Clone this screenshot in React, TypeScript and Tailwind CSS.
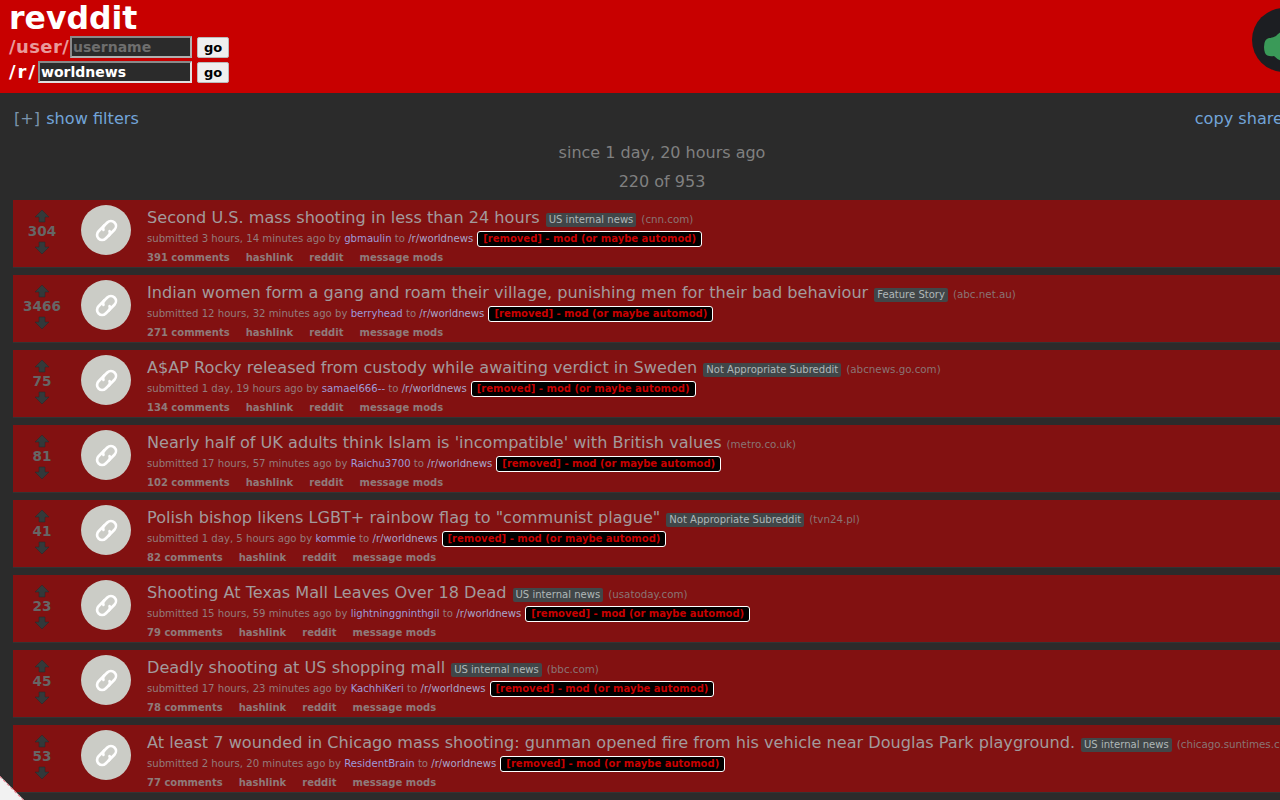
const posts = [
  { score: "304", title: "Second U.S. mass shooting in less than 24 hours", flair: "US internal news", domain: "cnn.com", age: "3 hours, 14 minutes", author: "gbmaulin", comments: "391 comments" },
  { score: "3466", title: "Indian women form a gang and roam their village, punishing men for their bad behaviour", flair: "Feature Story", domain: "abc.net.au", age: "12 hours, 32 minutes", author: "berryhead", comments: "271 comments" },
  { score: "75", title: "A$AP Rocky released from custody while awaiting verdict in Sweden", flair: "Not Appropriate Subreddit", domain: "abcnews.go.com", age: "1 day, 19 hours", author: "samael666--", comments: "134 comments" },
  { score: "81", title: "Nearly half of UK adults think Islam is 'incompatible' with British values", flair: "", domain: "metro.co.uk", age: "17 hours, 57 minutes", author: "Raichu3700", comments: "102 comments" },
  { score: "41", title: "Polish bishop likens LGBT+ rainbow flag to \"communist plague\"", flair: "Not Appropriate Subreddit", domain: "tvn24.pl", age: "1 day, 5 hours", author: "kommie", comments: "82 comments" },
  { score: "23", title: "Shooting At Texas Mall Leaves Over 18 Dead", flair: "US internal news", domain: "usatoday.com", age: "15 hours, 59 minutes", author: "lightninggninthgil", comments: "79 comments" },
  { score: "45", title: "Deadly shooting at US shopping mall", flair: "US internal news", domain: "bbc.com", age: "17 hours, 23 minutes", author: "KachhiKeri", comments: "78 comments" },
  { score: "53", title: "At least 7 wounded in Chicago mass shooting: gunman opened fire from his vehicle near Douglas Park playground.", flair: "US internal news", domain: "chicago.suntimes.com", age: "2 hours, 20 minutes", author: "ResidentBrain", comments: "77 comments" },
];

const Arrow = ({ down = false }: { down?: boolean }) => (
  <svg width="14" height="14" viewBox="0 0 14 14" className={down ? "rotate-180" : ""}>
    <path d="M7 1 L14 8 L10 8 L10 13 L4 13 L4 8 L0 8 Z" fill="#33393a" stroke="#24282a" strokeWidth="0.5" />
  </svg>
);

const LinkIcon = () => (
  <svg width="27" height="27" viewBox="0 0 24 24" fill="none" stroke="#ffffff" strokeWidth="2.4" strokeLinecap="round">
    <g transform="rotate(-45 12 12)">
      <path d="M14 7.5 H6.5 a4.5 4.5 0 0 0 0 9 H11 a3.5 3.5 0 0 0 2.5 -2.2" />
      <path d="M10 16.5 H17.5 a4.5 4.5 0 0 0 0 -9 H13 a3.5 3.5 0 0 0 -2.5 2.2" />
    </g>
  </svg>
);

const Post = ({ post }: { post: (typeof posts)[number] }) => (
  <div className="flex h-[68px] w-[1400px] bg-[#821111] border-b border-[#333333]">
    <div className="w-[58px] pt-[9px] flex flex-col items-center shrink-0">
      <Arrow />
      <div className="mb-px text-[13.6px] leading-[17px] font-bold text-[#666666]">{post.score}</div>
      <Arrow down />
    </div>
    <div className="w-[50px] h-[50px] mt-[5px] ml-[10px] rounded-full bg-[#cbccc6] flex items-center justify-center shrink-0">
      <LinkIcon />
    </div>
    <div className="ml-[16px] pt-[7px] whitespace-nowrap">
      <div className="h-[22px] flex items-baseline text-[#a39a9c]">
        <span className="text-[16.13px] leading-[22px]">{post.title}</span>
        {post.flair && (
          <span className="ml-[6px] px-[3px] text-[10.05px] leading-[14px] rounded-[2px] bg-[#414648] text-[#b0b8b8]">{post.flair}</span>
        )}
        <span className="ml-[5px] text-[10.3px] text-[#8a7474]">({post.domain})</span>
      </div>
      <div className="h-[19px] flex items-center text-[10.13px] text-[#947c7c]">
        <span>submitted {post.age} ago by&nbsp;</span>
        <span className="text-[#9f9ad8]">{post.author}</span>
        <span>&nbsp;to&nbsp;</span>
        <span className="text-[#a8a6cc]">/r/worldnews</span>
        <span className="ml-[4px] px-[5px] h-[16px] text-[10px] leading-[14px] border border-white rounded-[3px] bg-black text-[#c80000] font-bold">[removed] - mod (or maybe automod)</span>
      </div>
      <div className="h-[19px] flex items-center gap-[16px] text-[10px] font-bold text-[#8f7a7a]">
        <span>{post.comments}</span>
        <span>hashlink</span>
        <span>reddit</span>
        <span>message mods</span>
      </div>
    </div>
  </div>
);

export default function App() {
  return (
    <div className="relative h-[800px] w-[1280px] overflow-hidden bg-[#2b2b2b] font-['DejaVu_Sans',sans-serif]">
      <header className="relative h-[93px] bg-[#c80000] pl-[9px]">
        <div className="h-[34px] text-[31.5px] leading-[36px] font-bold text-white">revddit</div>
        <div className="flex items-center h-[25px] text-[18px] font-bold">
          <span className="w-[61px] tracking-[0.4px] text-[#e89a9a]">/user/</span>
          <input readOnly placeholder="username" className="w-[122px] h-[22px] px-px border-2 border-t-[#8a8a8a] border-l-[#8a8a8a] border-b-[#b0b0b0] border-r-[#b0b0b0] bg-[#2b2b2b] text-[14px] font-bold placeholder:text-[#6e6e6e]" />
          <button className="ml-[5px] mt-[2px] w-[32px] h-[21px] rounded-[2px] bg-[#efefef] border border-[#bbbbbb] text-[13px] font-bold text-black">go</button>
        </div>
        <div className="flex items-center h-[25px] text-[18px] font-bold">
          <span className="w-[29px] tracking-[2px] text-white">/r/</span>
          <input readOnly value="worldnews" className="w-[154px] h-[22px] px-px border-2 border-t-[#8a8a8a] border-l-[#8a8a8a] border-b-[#e0e0e0] border-r-[#e0e0e0] bg-[#2b2b2b] text-[14px] font-bold text-white" />
          <button className="ml-[5px] mt-[2px] w-[32px] h-[21px] rounded-[2px] bg-[#efefef] border border-[#bbbbbb] text-[13px] font-bold text-black">go</button>
        </div>
        <svg width="64" height="64" viewBox="0 0 64 64" className="absolute left-[1252px] top-[8px]">
          <circle cx="32" cy="32" r="32" fill="#1c1e22" />
          <path d="M12 39 Q12 31 17 30 Q21 30 24 28 Q26 26 30 23 L30 53 Q26 52 22 48 Q15 49 13 45 Q12 42 12 39 Z" fill="#3a9a58" />
        </svg>
      </header>
      <div className="flex w-[1283px] justify-between pl-[14px] pt-[15px] text-[16.13px] leading-[22px] text-[#72a4d8] whitespace-nowrap">
        <div><span className="mr-px text-[#7a93ad]">[+]</span> show filters</div>
        <div>copy share</div>
      </div>
      <div className="w-[1324px] pt-[12px] text-center text-[16px] leading-[22px] text-[#808080]">since 1 day, 20 hours ago</div>
      <div className="w-[1324px] pt-[7px] text-center text-[16px] leading-[22px] text-[#808080]">220 of 953</div>
      <div className="mt-[7px] ml-[13px] flex flex-col gap-[7px]">
        {posts.map((post) => (
          <Post key={post.author} post={post} />
        ))}
      </div>
      <div className="absolute left-[-17px] bottom-[-17px] w-[34px] h-[34px] rotate-45 bg-[#f2f2f2] border-t border-dashed border-[#f08090]" />
    </div>
  );
}
